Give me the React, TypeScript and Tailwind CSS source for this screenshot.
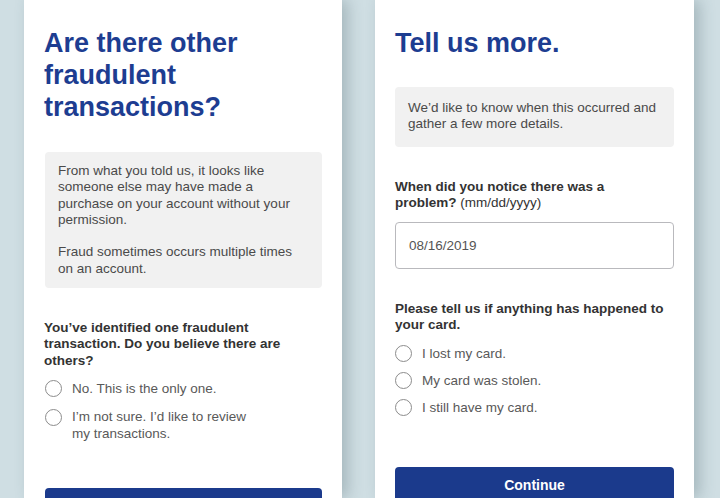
const font = { fontFamily: '"Liberation Sans", Arial, sans-serif' };

function Radio({ children }: { children: React.ReactNode }) {
  return (
    <label className="flex items-start gap-[10px]">
      <span className="mt-[-0.5px] h-[17px] w-[17px] shrink-0 rounded-full border-[1.5px] border-[#8c8c8c] bg-white" />
      <span className="text-[13.5px] leading-[16.3px] text-[#595959]">{children}</span>
    </label>
  );
}

function Card({ children, width }: { children: React.ReactNode; width: string }) {
  return (
    <div
      className={`${width} h-full shrink-0 bg-white px-[20px] pt-[27px] shadow-[6px_0_14px_rgba(60,85,95,0.28)]`}
    >
      {children}
    </div>
  );
}

export default function App() {
  return (
    <div
      className="flex h-[498px] w-[720px] gap-[33px] overflow-hidden bg-[#cfdee3] pl-[24px]"
      style={font}
    >
      <Card width="w-[318px]">
        <h1 className="text-[27px] font-bold leading-[32px] text-[#1d3d91]">
          Are there other
          <br />
          fraudulent
          <br />
          transactions?
        </h1>
        <div className="ml-px mt-[29px] rounded-[4px] bg-[#f1f1f1] px-[13px] py-[11px] text-[13.5px] leading-[16.3px] text-[#4a4a4a]">
          <p>
            From what you told us, it looks like someone else may have made a purchase on your
            account without your permission.
          </p>
          <p className="mt-[16.3px]">Fraud sometimes occurs multiple times on an account.</p>
        </div>
        <p className="mt-[32px] text-[13.5px] font-bold leading-[16.3px] text-[#333]">
          You’ve identified one fraudulent transaction. Do you believe there are others?
        </p>
        <div className="ml-px mt-[12px] flex flex-col gap-[12px]">
          <Radio>No. This is the only one.</Radio>
          <Radio>
            I’m not sure. I’d like to review
            <br />
            my transactions.
          </Radio>
        </div>
        <div className="ml-px mt-[46px] h-[38px] w-[277px] rounded-[4px] bg-[#1b3a8c]" />
      </Card>

      <Card width="w-[319px]">
        <h1 className="text-[27px] font-bold leading-[32px] text-[#1d3d91]">Tell us more.</h1>
        <div className="mt-[28px] rounded-[4px] bg-[#f1f1f1] px-[13px] pb-[14px] pt-[13px] text-[13.5px] leading-[16.3px] text-[#4a4a4a]">
          We’d like to know when this occurred and gather a few more details.
        </div>
        <p className="mt-[32px] text-[13.5px] leading-[16.3px] text-[#333]">
          <span className="font-bold">
            When did you notice there was a
            <br />
            problem?
          </span>{" "}
          (mm/dd/yyyy)
        </p>
        <div className="mt-[11px] flex h-[47px] items-center rounded-[4px] border border-[#b9b9bd] px-[13px] text-[13.5px] text-[#555]">
          08/16/2019
        </div>
        <p className="mt-[32px] text-[13.5px] font-bold leading-[16.3px] text-[#333]">
          Please tell us if anything has happened to your card.
        </p>
        <div className="mt-[12px] flex flex-col gap-[10.5px]">
          <Radio>I lost my card.</Radio>
          <Radio>My card was stolen.</Radio>
          <Radio>I still have my card.</Radio>
        </div>
        <button className="mt-[51px] h-[36px] w-full rounded-[4px] bg-[#1b3a8c] text-[14px] font-bold text-white">
          Continue
        </button>
      </Card>
    </div>
  );
}
